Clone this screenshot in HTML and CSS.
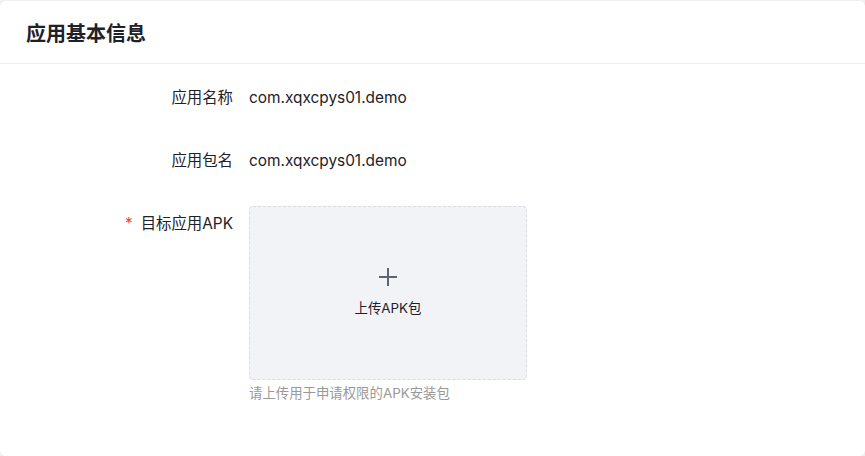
FILE: index.html
```html
<!DOCTYPE html>
<html lang="zh-CN">
<head>
    <meta charset="UTF-8">
    <title>应用基本信息</title>
    <link rel="stylesheet" href="styles.css">
</head>
<body>
<div class="card">
    <div class="card-header">
        <h2 class="card-title">应用基本信息</h2>
    </div>
    <div class="form">
        <div class="form-row">
            <label class="form-label">应用名称</label>
            <div class="form-value">com.xqxcpys01.demo</div>
        </div>
        <div class="form-row">
            <label class="form-label">应用包名</label>
            <div class="form-value">com.xqxcpys01.demo</div>
        </div>
        <div class="form-row">
            <label class="form-label"><span class="required">*</span>目标应用APK</label>
            <div class="form-control">
                <div class="upload">
                    <svg class="upload-icon" width="18" height="18" viewBox="0 0 18 18">
                        <path d="M9 0v18M0 9h18" stroke="#5e6470" stroke-width="2" fill="none"/>
                    </svg>
                    <span class="upload-text">上传APK包</span>
                </div>
                <div class="form-tip">请上传用于申请权限的APK安装包</div>
            </div>
        </div>
    </div>
</div>
</body>
</html>
```

FILE: styles.css
```css
* {
    margin: 0;
    padding: 0;
    box-sizing: border-box;
}
body {
    background-color: #f0f0f0;
    font-family: "Inter", "Noto Sans CJK SC", sans-serif;
    color: #1d2129;
}
.card {
    margin-top: 1px;
    min-height: 455px;
    background-color: #fff;
    border-radius: 6px;
}
.card-header {
    height: 63px;
    display: flex;
    align-items: center;
    padding: 0 26px;
    border-bottom: 1px solid #ededed;
}
.card-title {
    font-size: 20px;
    font-weight: 600;
    color: #1d2129;
}
.form {
    padding-top: 16px;
    display: flex;
    flex-direction: column;
    gap: 27px;
}
.form-row {
    display: flex;
    gap: 16px;
}
.form-label {
    width: 233px;
    text-align: right;
    font-size: 15.4px;
    line-height: 36px;
}
.required {
    color: #f53f3f;
    margin-right: 8px;
}
.form-value {
    font-size: 15.4px;
    line-height: 36px;
}
.upload {
    width: 278px;
    height: 174px;
    display: flex;
    flex-direction: column;
    align-items: center;
    justify-content: center;
    gap: 12px;
    background-color: #f2f3f7;
    border: 1px dashed #d9dbe0;
    border-radius: 4px;
}
.upload-icon {
    display: block;
}
.upload-text {
    font-size: 13.4px;
    line-height: 20px;
    color: #1d2129;
}
.form-tip {
    margin-top: 3px;
    font-size: 13.4px;
    line-height: 20px;
    color: #999;
}
```
